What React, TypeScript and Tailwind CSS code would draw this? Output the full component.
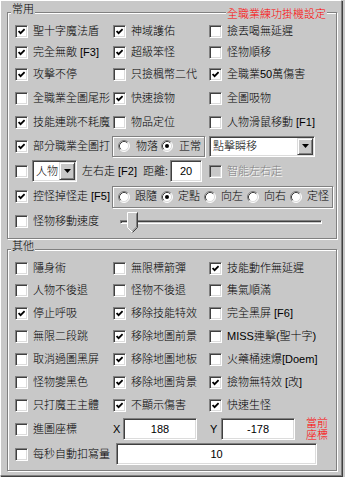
import React from "react";

const etched = "border border-[#808080] shadow-[inset_1px_1px_0_#fff,1px_1px_0_#fff]";
const sunken =
  "border border-[#808080] border-b-white border-r-white shadow-[inset_1px_1px_0_#404040,inset_-1px_-1px_0_#dcdcdc]";
const raised =
  "border border-[#dcdcdc] border-b-[#404040] border-r-[#404040] shadow-[inset_1px_1px_0_#fff,inset_-1px_-1px_0_#808080]";

function Check({ on = false, disabled = false }: { on?: boolean; disabled?: boolean }) {
  return (
    <span
      className={`flex h-[13px] w-[13px] shrink-0 items-center justify-center ${sunken} ${
        disabled ? "bg-[#c8c8c8]" : "bg-white"
      }`}
    >
      {on && (
        <svg width="7" height="7" viewBox="0 0 7 7">
          <path d="M0.6 3 L2.6 5.2 L6.6 1" stroke="#000" strokeWidth="1.8" fill="none" />
        </svg>
      )}
    </span>
  );
}

function Item({ label, on = false }: { label: string; on?: boolean }) {
  return (
    <div className="flex items-center">
      <Check on={on} />
      <span className="ml-[5px] whitespace-nowrap">{label}</span>
    </div>
  );
}

function Radio({ on = false }: { on?: boolean }) {
  return (
    <svg width="12" height="12" viewBox="0 0 12 12" className="shrink-0">
      <circle cx="6" cy="6" r="5" fill="#fff" />
      <path d="M2.11 9.89A5.5 5.5 0 0 1 9.89 2.11" stroke="#808080" fill="none" />
      <path d="M2.82 9.18A4.5 4.5 0 0 1 9.18 2.82" stroke="#404040" fill="none" />
      <path d="M9.89 2.11A5.5 5.5 0 0 1 2.11 9.89" stroke="#fff" fill="none" />
      <path d="M9.18 2.82A4.5 4.5 0 0 1 2.82 9.18" stroke="#dcdcdc" fill="none" />
      {on && <circle cx="6" cy="6" r="2" fill="#000" />}
    </svg>
  );
}

function Option({ label, on = false, gap }: { label: string; on?: boolean; gap: string }) {
  return (
    <div className="flex w-[43px] shrink-0 items-center">
      <Radio on={on} />
      <span className={`${gap} whitespace-nowrap`}>{label}</span>
    </div>
  );
}

function Combo({ text, className }: { text: string; className: string }) {
  return (
    <div className={`flex items-stretch bg-white ${sunken} ${className}`}>
      <span className="flex flex-1 items-center pl-[3px] whitespace-nowrap">{text}</span>
      <span className={`m-[1px] flex w-[16px] items-center justify-center bg-[#c8c8c8] ${raised}`}>
        <svg width="7" height="4" viewBox="0 0 7 4">
          <path d="M0 0 H7 L3.5 4 Z" fill="#000" />
        </svg>
      </span>
    </div>
  );
}

function Field({ value, className }: { value: string; className: string }) {
  return (
    <div className={`flex h-[22px] items-center justify-center bg-white ${sunken} ${className}`}>
      {value}
    </div>
  );
}

function Slider() {
  return (
    <div className="relative flex h-full w-[202px] items-center">
      <div className="h-[4px] w-full border border-[#808080] border-b-white border-r-white shadow-[inset_1px_1px_0_#404040]" />
      <svg className="absolute left-[7px] top-[3px]" width="11" height="21" viewBox="0 0 11 21">
        <path d="M0.5 15.5 V0.5 H10.5 V15.5 L5.5 20.5 Z" fill="#c8c8c8" />
        <path d="M5.5 20.5 L0.5 15.5 V0.5 H10" stroke="#fff" fill="none" />
        <path d="M10.5 0.5 V15.5 L5.5 20.5" stroke="#404040" fill="none" />
        <path d="M9.5 1.5 V15 L5.5 19" stroke="#808080" fill="none" />
      </svg>
    </div>
  );
}

function Group({
  title,
  className,
  children,
}: {
  title: string;
  className: string;
  children: React.ReactNode;
}) {
  return (
    <div className={`relative ${etched} ${className}`}>
      <span className="absolute -top-[10px] left-[3px] bg-[#c8c8c8] px-[1px] leading-[13px]">{title}</span>
      {children}
    </div>
  );
}

const grid = "grid grid-cols-[98px_96px_1fr] items-center";

export default function App() {
  return (
    <div className="h-[477px] w-[345px] bg-[#c8c8c8] font-['Liberation_Sans','Noto_Sans_CJK_TC',sans-serif] text-[11px] font-light text-black">
      <div className="h-[476px] w-[342px] border border-white border-b-[#808080] border-r-[#808080] pl-[6px] pt-[11px] shadow-[1px_1px_0_#404040]">
        {/* 常用 */}
        <Group title="常用" className="h-[227px] w-[330px] pl-[7px] pt-[8px]">
          <span className="absolute -top-[5px] left-[218px] bg-[#c8c8c8] px-[1px] leading-[13px] text-[#ff0000]">
            全職業練功掛機設定
          </span>
          <div className={`${grid} h-[21px]`}>
            <Item label="聖十字魔法盾" on />
            <Item label="神域護佑" on />
            <Item label="撿丟喝無延遲" />
          </div>
          <div className={`${grid} h-[21px]`}>
            <Item label="完全無敵 [F3]" on />
            <Item label="超級笨怪" on />
            <Item label="怪物順移" />
          </div>
          <div className={`${grid} h-[23px]`}>
            <Item label="攻擊不停" on />
            <Item label="只撿楓幣二代" />
            <Item label="全職業50萬傷害" on />
          </div>
          <div className={`${grid} h-[24px]`}>
            <Item label="全職業全圖尾形" />
            <Item label="快速撿物" on />
            <Item label="全圖吸物" />
          </div>
          <div className={`${grid} h-[24px]`}>
            <Item label="技能連跳不耗魔" on />
            <Item label="物品定位" />
            <Item label="人物滑鼠移動 [F1]" />
          </div>
          <div className="flex h-[24px] items-center">
            <div className="w-[97px] shrink-0">
              <Item label="部分職業全圖打" on />
            </div>
            <div className={`flex h-[21px] w-[93px] items-center pl-[5px] ${etched}`}>
              <Option label="物落" gap="ml-[6px]" />
              <Option label="正常" gap="ml-[6px]" on />
            </div>
            <Combo text="點擊瞬移" className="ml-[4px] h-[21px] w-[106px]" />
          </div>
          <div className="flex h-[26px] items-center">
            <Check />
            <Combo text="人物" className="ml-[4px] h-[22px] w-[45px]" />
            <span className="ml-[5px] w-[61px] whitespace-nowrap">左右走 [F2]</span>
            <span className="w-[27px] whitespace-nowrap">距離:</span>
            <Field value="20" className="w-[32px]" />
            <div className="ml-[7px] flex items-center">
              <Check disabled />
              <span className="ml-[5px] text-[#808080] [text-shadow:1px_1px_0_#fff]">智能左右走</span>
            </div>
          </div>
          <div className="flex h-[25px] items-center">
            <div className="w-[97px] shrink-0">
              <Item label="控怪掉怪走 [F5]" on />
            </div>
            <div className={`flex h-[22px] w-[221px] items-center pl-[5px] ${etched}`}>
              <Option label="跟隨" gap="ml-[5px]" />
              <Option label="定點" gap="ml-[5px]" on />
              <Option label="向左" gap="ml-[5px]" />
              <Option label="向右" gap="ml-[5px]" />
              <Option label="定怪" gap="ml-[5px]" />
            </div>
          </div>
          <div className="flex h-[25px] items-center">
            <div className="w-[105px] shrink-0">
              <Item label="怪物移動速度" />
            </div>
            <Slider />
          </div>
        </Group>

        {/* 其他 */}
        <Group title="其他" className="mt-[10px] h-[222px] w-[330px] pl-[7px] pt-[7px]">
          <div className={`${grid} h-[22px]`}>
            <Item label="隱身術" />
            <Item label="無限標箭彈" />
            <Item label="技能動作無延遲" on />
          </div>
          <div className={`${grid} h-[23px]`}>
            <Item label="人物不後退" />
            <Item label="怪物不後退" />
            <Item label="集氣順滿" />
          </div>
          <div className={`${grid} h-[23px]`}>
            <Item label="停止呼吸" on />
            <Item label="移除技能特效" on />
            <Item label="完全黑屏 [F6]" />
          </div>
          <div className={`${grid} h-[23px]`}>
            <Item label="無限二段跳" />
            <Item label="移除地圖前景" on />
            <Item label="MISS連擊(聖十字)" />
          </div>
          <div className={`${grid} h-[23px]`}>
            <Item label="取消過圖黑屏" />
            <Item label="移除地圖地板" on />
            <Item label="火藥桶速爆[Doem]" />
          </div>
          <div className={`${grid} h-[23px]`}>
            <Item label="怪物變黑色" />
            <Item label="移除地圖背景" on />
            <Item label="撿物無特效 [改]" on />
          </div>
          <div className={`${grid} h-[23px]`}>
            <Item label="只打魔王主體" />
            <Item label="不顯示傷害" on />
            <Item label="快速生怪" on />
          </div>
          <div className="flex h-[24px] items-center">
            <div className="w-[98px] shrink-0">
              <Item label="進圖座標" />
            </div>
            <span className="w-[10px]">X</span>
            <Field value="188" className="w-[74px]" />
            <span className="ml-[13px] w-[11px]">Y</span>
            <Field value="-178" className="w-[74px]" />
            <span className="ml-[11px] w-[24px] leading-[12px] text-[#ff0000]">
              當前
              <br />
              座標
            </span>
          </div>
          <div className="flex h-[26px] items-center">
            <div className="w-[101px] shrink-0">
              <Item label="每秒自動扣寫量" />
            </div>
            <Field value="10" className="w-[201px]" />
          </div>
        </Group>
      </div>
    </div>
  );
}
